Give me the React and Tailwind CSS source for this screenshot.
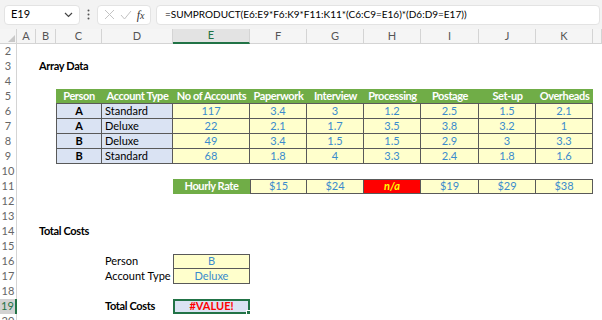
import React from 'react';

const font = { fontFamily: 'Lato, "Liberation Sans", sans-serif' };

const head = 'bg-[#70ad47] text-white font-bold tracking-[-0.4px] flex items-center justify-center border-b border-[#595959] whitespace-nowrap';
const person = 'bg-[#dae3f3] font-bold flex items-center justify-center border-l border-r border-b border-[#595959]';
const acct = 'bg-[#dae3f3] flex items-center pl-[3px] border-r border-b border-[#595959] whitespace-nowrap';
const yel = 'bg-[#ffffcc] text-[#3a8bcd] flex items-center justify-center border-r border-b border-[#595959]';
const rate = 'bg-[#ffffcc] text-[#3a8bcd] flex items-center justify-center border-t border-r border-b border-[#595959]';
const label = 'font-bold tracking-[-0.35px] flex items-center pl-[3px] whitespace-nowrap';

const data = [
  ['A', 'Standard', 117, 3.4, 3, 1.2, 2.5, 1.5, 2.1],
  ['A', 'Deluxe', 22, 2.1, 1.7, 3.5, 3.8, 3.2, 1],
  ['B', 'Deluxe', 49, 3.4, 1.5, 1.5, 2.9, 3, 3.3],
  ['B', 'Standard', 68, 1.8, 4, 3.3, 2.4, 1.8, 1.6],
];

const headers = ['Person', 'Account Type', 'No of Accounts', 'Paperwork', 'Interview', 'Processing', 'Postage', 'Set-up', 'Overheads'];

// one sheet row: row number + 12 cells (A..L)
const Row = ({ n, cells = [], active }) => {
  const list = [...cells];
  while (list.length < 12) list.push(null);
  return (
    <>
      <div
        className={
          active
            ? 'flex items-center justify-center bg-[#d2d2d2] text-[#217346] border-r-2 border-[#217346]'
            : 'flex items-center justify-center text-[#666] border-r border-[#d4d4d4]'
        }
      >
        {n}
      </div>
      {list.map((c, i) =>
        c ? (
          <div key={i} className={c.cls}>
            {c.text}
          </div>
        ) : (
          <div key={i} />
        )
      )}
    </>
  );
};

const letters = ['A', 'B', 'C', 'D', 'E', 'F', 'G', 'H', 'I', 'J', 'K', ''];

const App = () => {
  return (
    <div className="w-[602px] h-[320px] overflow-hidden bg-white text-[11px] text-black" style={font}>
      {/* Formula bar */}
      <div className="h-[29px] bg-[#f3f3f3] flex items-center pl-[4px] pr-[2px]">
        <div className="w-[76px] h-[20px] bg-white rounded-[4px] border border-[#e3e3e3] flex items-center justify-between px-[6px]">
          <span>E19</span>
          <svg width="9" height="6" viewBox="0 0 9 6"><path d="M1 1l3.5 3.5L8 1" stroke="#444" strokeWidth="1.2" fill="none" /></svg>
        </div>
        <div className="w-[17px] flex justify-center">
          <svg width="3" height="11" viewBox="0 0 3 11"><circle cx="1.5" cy="1.5" r="1" fill="#555" /><circle cx="1.5" cy="5.5" r="1" fill="#555" /><circle cx="1.5" cy="9.5" r="1" fill="#555" /></svg>
        </div>
        <div className="w-[54px] h-[20px] bg-white rounded-[4px] border border-[#e3e3e3] flex items-center justify-around px-[3px]">
          <svg width="11" height="11" viewBox="0 0 11 11"><path d="M1 1l9 9M10 1l-9 9" stroke="#c3c3c3" strokeWidth="1" /></svg>
          <svg width="12" height="10" viewBox="0 0 12 10"><path d="M1 5l3.5 4L11 1" stroke="#c3c3c3" strokeWidth="1" fill="none" /></svg>
          <span className="italic text-[12px] text-[#333]" style={{ fontFamily: '"Liberation Serif", serif' }}>
            f<span className="text-[10px]">x</span>
          </span>
        </div>
        <div className="ml-[5px] flex-1 h-[20px] bg-white rounded-[4px] border border-[#e3e3e3] flex items-center pl-[8px] text-[10px] whitespace-nowrap">
          =SUMPRODUCT(E6:E9*F6:K9*F11:K11*(C6:C9=E16)*(D6:D9=E17))
        </div>
      </div>

      {/* Sheet */}
      <div className="grid grid-cols-[17px_19px_20px_46px_71px_77px_57px_57px_57px_58px_57px_57px_1fr] auto-rows-[15px]">
        {/* column headers */}
        <div className="relative bg-[#f5f5f5] border-r border-b border-[#d4d4d4]">
          <svg className="absolute right-[1px] bottom-[1px]" width="7" height="7" viewBox="0 0 7 7"><path d="M7 0v7H0z" fill="#c8c8c8" /></svg>
        </div>
        {letters.map((l, i) =>
          l === 'E' ? (
            <div key={i} className="bg-[#e3e3e3] text-[#217346] flex items-center justify-center border-r border-[#d4d4d4] border-b-2 border-b-[#217346]">
              {l}
            </div>
          ) : (
            <div key={i} className="bg-[#f5f5f5] text-[#555] flex items-center justify-center border-r border-b border-[#d4d4d4]">
              {l}
            </div>
          )
        )}

        <Row n={2} />
        <Row n={3} cells={[null, { text: 'Array Data', cls: label }]} />
        <Row n={4} />
        <Row n={5} cells={[null, null, ...headers.map((h) => ({ text: h, cls: head }))]} />
        {data.map((r, i) => (
          <Row
            key={i}
            n={6 + i}
            cells={[
              null,
              null,
              { text: r[0], cls: person },
              { text: r[1], cls: acct },
              ...r.slice(2).map((v) => ({ text: v, cls: yel })),
            ]}
          />
        ))}
        <Row n={10} />
        <Row
          n={11}
          cells={[
            null,
            null,
            null,
            null,
            { text: 'Hourly Rate', cls: 'bg-[#70ad47] text-white font-bold tracking-[-0.4px] flex items-center justify-center' },
            { text: '$15', cls: rate + ' border-l' },
            { text: '$24', cls: rate },
            { text: 'n/a', cls: 'bg-[#ff0000] text-[#ffff00] font-bold italic flex items-center justify-center border-t border-r border-b border-[#595959]' },
            { text: '$19', cls: rate },
            { text: '$29', cls: rate },
            { text: '$38', cls: rate },
          ]}
        />
        <Row n={12} />
        <Row n={13} />
        <Row n={14} cells={[null, { text: 'Total Costs', cls: label }]} />
        <Row n={15} />
        <Row
          n={16}
          cells={[null, null, null, { text: 'Person', cls: 'flex items-center pl-[3px]' }, { text: 'B', cls: 'bg-[#ffffcc] text-[#3a8bcd] flex items-center justify-center border border-[#595959]' }]}
        />
        <Row
          n={17}
          cells={[null, null, null, { text: 'Account Type', cls: 'flex items-center pl-[3px] whitespace-nowrap' }, { text: 'Deluxe', cls: 'bg-[#ffffcc] text-[#3a8bcd] flex items-center justify-center border-l border-r border-b border-[#595959]' }]}
        />
        <Row n={18} />
        <Row
          n={19}
          active
          cells={[
            null,
            null,
            null,
            { text: 'Total Costs', cls: label },
            {
              text: (
                <>
                  #VALUE!
                  <span className="absolute right-[-3px] bottom-[-3px] w-[5px] h-[5px] bg-[#217346] border border-white" />
                </>
              ),
              cls: 'relative bg-[#dae3f3] text-[#ff0000] font-bold flex items-center justify-center border-2 border-[#217346]',
            },
          ]}
        />
        <Row n={20} />
      </div>
    </div>
  );
};

export default App;
